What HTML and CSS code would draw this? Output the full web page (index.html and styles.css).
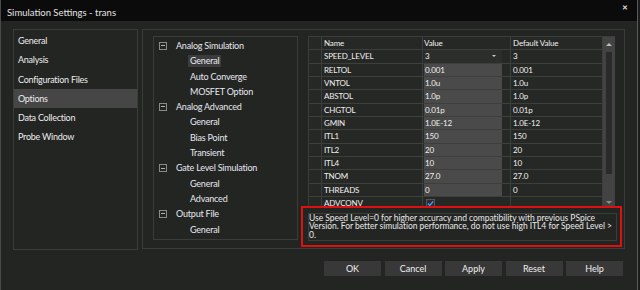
FILE: index.html
```html
<!DOCTYPE html>
<html lang="en">
<head>
  <meta charset="UTF-8" />
  <title>Simulation Settings - trans</title>
  <link rel="stylesheet" href="styles.css">
</head>
<body>
  <div class="window">
    <div class="titlebar">
      <span class="title">Simulation Settings - trans</span>
      <span class="close">✕</span>
    </div>

    <div class="main">
      <div class="nav">
        <div class="nav-item">General</div>
        <div class="nav-item">Analysis</div>
        <div class="nav-item">Configuration Files</div>
        <div class="nav-item active">Options</div>
        <div class="nav-item">Data Collection</div>
        <div class="nav-item">Probe Window</div>
      </div>

      <div class="content">
        <div class="tree">
          <div class="node parent"><span class="box"></span>Analog Simulation</div>
          <div class="node child"><span class="selected">General</span></div>
          <div class="node child">Auto Converge</div>
          <div class="node child">MOSFET Option</div>
          <div class="node parent"><span class="box"></span>Analog Advanced</div>
          <div class="node child">General</div>
          <div class="node child">Bias Point</div>
          <div class="node child">Transient</div>
          <div class="node parent"><span class="box"></span>Gate Level Simulation</div>
          <div class="node child">General</div>
          <div class="node child">Advanced</div>
          <div class="node parent"><span class="box"></span>Output File</div>
          <div class="node child">General</div>
        </div>

        <div class="props">
          <div class="grid-wrap">
            <div class="grid">
              <div class="row head">
                <div class="cell rh"></div>
                <div class="cell name">Name</div>
                <div class="cell value">Value</div>
                <div class="cell def">Default Value</div>
              </div>
              <div class="row">
                <div class="cell rh"></div>
                <div class="cell name">SPEED_LEVEL</div>
                <div class="cell value"><span class="combo">3<span class="arrow"></span></span></div>
                <div class="cell def">3</div>
              </div>
              <div class="row">
                <div class="cell rh"></div>
                <div class="cell name">RELTOL</div>
                <div class="cell value"><span class="edit">0.001</span></div>
                <div class="cell def">0.001</div>
              </div>
              <div class="row">
                <div class="cell rh"></div>
                <div class="cell name">VNTOL</div>
                <div class="cell value"><span class="edit">1.0u</span></div>
                <div class="cell def">1.0u</div>
              </div>
              <div class="row">
                <div class="cell rh"></div>
                <div class="cell name">ABSTOL</div>
                <div class="cell value"><span class="edit">1.0p</span></div>
                <div class="cell def">1.0p</div>
              </div>
              <div class="row">
                <div class="cell rh"></div>
                <div class="cell name">CHGTOL</div>
                <div class="cell value"><span class="edit">0.01p</span></div>
                <div class="cell def">0.01p</div>
              </div>
              <div class="row">
                <div class="cell rh"></div>
                <div class="cell name">GMIN</div>
                <div class="cell value"><span class="edit">1.0E-12</span></div>
                <div class="cell def">1.0E-12</div>
              </div>
              <div class="row">
                <div class="cell rh"></div>
                <div class="cell name">ITL1</div>
                <div class="cell value"><span class="edit">150</span></div>
                <div class="cell def">150</div>
              </div>
              <div class="row">
                <div class="cell rh"></div>
                <div class="cell name">ITL2</div>
                <div class="cell value"><span class="edit">20</span></div>
                <div class="cell def">20</div>
              </div>
              <div class="row">
                <div class="cell rh"></div>
                <div class="cell name">ITL4</div>
                <div class="cell value"><span class="edit">10</span></div>
                <div class="cell def">10</div>
              </div>
              <div class="row">
                <div class="cell rh"></div>
                <div class="cell name">TNOM</div>
                <div class="cell value"><span class="edit">27.0</span></div>
                <div class="cell def">27.0</div>
              </div>
              <div class="row">
                <div class="cell rh"></div>
                <div class="cell name">THREADS</div>
                <div class="cell value"><span class="edit">0</span></div>
                <div class="cell def">0</div>
              </div>
              <div class="row">
                <div class="cell rh"></div>
                <div class="cell name">ADVCONV</div>
                <div class="cell value">
                  <svg class="check" width="9" height="9" viewBox="0 0 9 9">
                    <rect x="0.5" y="0.5" width="8" height="8" fill="#2a2d33" stroke="#555"/>
                    <path d="M2 4.6 L3.8 6.4 L7.2 2.4" fill="none" stroke="#3ba0ff" stroke-width="1.4"/>
                  </svg>
                </div>
                <div class="cell def"></div>
              </div>
            </div>
            <div class="scrollbar">
              <span class="up"></span>
              <span class="thumb"></span>
              <span class="down"></span>
            </div>
          </div>

          <div class="callout">
            <div class="desc">Use Speed Level=0 for higher accuracy and compatibility with previous PSpice Version. For better simulation performance, do not use high ITL4 for Speed Level &gt; 0.</div>
          </div>
        </div>
      </div>
    </div>

    <div class="buttons">
      <button class="btn">OK</button>
      <button class="btn">Cancel</button>
      <button class="btn">Apply</button>
      <button class="btn">Reset</button>
      <button class="btn">Help</button>
    </div>
  </div>
</body>
</html>
```

FILE: styles.css
```css
body {
  margin: 0;
  padding: 0;
  width: 640px;
  height: 290px;
  overflow: hidden;
  background: #1c1c1c;
  font-family: "Lato", "Liberation Sans", sans-serif;
  color: #e8e8e8;
}

.window {
  width: 636px;
  height: 290px;
  background: #232523;
  border-left: 1px solid #4a4a4a;
  border-right: 1px solid #5a5a5a;
  display: flex;
  flex-direction: column;
}

.titlebar {
  height: 21px;
  flex-shrink: 0;
  background: #0b0b0b;
  display: flex;
  align-items: center;
  justify-content: space-between;
  padding: 0 9px 0 6px;
}

.title {
  font-size: 9.5px;
  color: #e4e4e4;
  padding-top: 3px;
}

.close {
  font-size: 7px;
  font-weight: bold;
  color: #d8d8d8;
  margin-top: -6px;
}

.main {
  display: flex;
  gap: 4px;
  padding: 8px 0 0 12px;
}

.nav {
  width: 123px;
  height: 218px;
  border: 1px solid #3b3d3b;
  padding-top: 1px;
  box-sizing: content-box;
}

.nav-item {
  height: 19.3px;
  line-height: 19.3px;
  padding-left: 4px;
  font-size: 9px;
  letter-spacing: -0.25px;
  color: #ececec;
  white-space: nowrap;
}

.nav-item.active {
  background: #464646;
}

.content {
  width: 483px;
  border: 1px solid #3b3d3b;
  display: flex;
  gap: 3px;
  padding: 6px 0 0 10px;
  box-sizing: border-box;
  height: 220px;
}

.tree {
  width: 145px;
  height: 204px;
  box-sizing: border-box;
  border: 1px solid #3b3d3b;
  padding-top: 1px;
}

.node {
  height: 15.3px;
  line-height: 15.3px;
  font-size: 9px;
  letter-spacing: -0.2px;
  color: #e6e8f0;
  white-space: nowrap;
  display: flex;
  align-items: center;
}

.node.parent {
  padding-left: 5px;
}

.node.child {
  padding-left: 36px;
}

.box {
  width: 6px;
  height: 6px;
  border: 1px solid #8a8a8a;
  margin-right: 9px;
  position: relative;
}

.box::after {
  content: "";
  position: absolute;
  left: 1px;
  right: 1px;
  top: 2.5px;
  height: 1px;
  background: #b0b0b0;
}

.selected {
  background: #3c3c3c;
  padding: 0 2px;
  margin-left: -2px;
  line-height: 12px;
}

.props {
  display: flex;
  flex-direction: column;
  width: 321px;
}

.grid-wrap {
  margin-left: 7px;
  width: 307px;
  height: 170px;
  overflow: hidden;
  display: flex;
  border-top: 1px solid #3b3d3b;
  border-left: 1px solid #3b3d3b;
  box-sizing: border-box;
}

.grid {
  width: 294px;
}

.row {
  display: flex;
  height: 13.33px;
  box-sizing: border-box;
  border-bottom: 1px solid #3d3f3d;
}

.cell {
  font-size: 8px;
  letter-spacing: -0.15px;
  line-height: 12.3px;
  color: #f0f0f0;
  white-space: nowrap;
  box-sizing: border-box;
  border-right: 1px solid #3d3f3d;
  background: #262826;
  overflow: hidden;
}

.cell.rh { width: 13px; }
.cell.name { width: 101px; padding-left: 2px; }
.cell.value { width: 88px; padding-left: 1px; }
.cell.def { width: 92px; padding-left: 2px; }

.edit,
.combo {
  display: block;
  width: 78px;
  height: 12.33px;
  padding-left: 1px;
  background: #4a4a4a;
  box-sizing: border-box;
}

.combo {
  background: #2c2e2c;
  position: relative;
}

.arrow {
  position: absolute;
  right: 6px;
  top: 5px;
  border-left: 2.5px solid transparent;
  border-right: 2.5px solid transparent;
  border-top: 2.5px solid #c8c8c8;
}

.check {
  display: block;
  margin: 2px 0 0 2px;
}

.scrollbar {
  width: 12px;
  background: #434343;
  position: relative;
  flex-shrink: 0;
}

.scrollbar .up,
.scrollbar .down {
  position: absolute;
  left: 3px;
  border-left: 3px solid transparent;
  border-right: 3px solid transparent;
}

.scrollbar .up {
  top: 6px;
  border-bottom: 3px solid #bdbdbd;
}

.scrollbar .down {
  top: 164px;
  border-top: 3px solid #8a8a8a;
}

.scrollbar .thumb {
  position: absolute;
  left: 3px;
  width: 6px;
  top: 15px;
  height: 122px;
  background: #2a2a2a;
}

.callout {
  width: 321px;
  height: 41px;
  border: 2px solid #e01010;
  box-sizing: border-box;
  padding: 5px 3px 4px 5px;
  background: #232523;
}

.desc {
  height: 28px;
  border: 1px solid #3b3d3b;
  box-sizing: border-box;
  font-size: 8.5px;
  letter-spacing: -0.04px;
  line-height: 8.4px;
  color: #e8e8e8;
  padding: 0;
}

.buttons {
  display: flex;
  justify-content: flex-end;
  gap: 3.5px;
  padding: 11px 14px 0 0;
}

.btn {
  width: 57px;
  height: 15px;
  background: #383838;
  border: none;
  color: #f0f0f0;
  font-family: "Lato", "Liberation Sans", sans-serif;
  font-size: 9px;
  padding: 0;
}
```
